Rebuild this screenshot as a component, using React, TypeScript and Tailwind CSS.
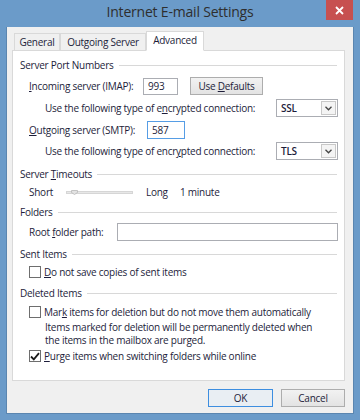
import React from "react";

const txt = "text-[#1d1d3a] whitespace-nowrap";

function Header({ label }: { label: React.ReactNode }) {
  return (
    <div className="flex items-center h-[16px] pl-[7px] pr-[7px]">
      <span className={txt}>{label}</span>
      <div className="flex-1 h-px bg-[#d8d8d8] ml-[5px]" />
    </div>
  );
}

function Dropdown({ value }: { value: string }) {
  return (
    <div className="w-[62px] h-[18px] bg-white border border-[#abadb3] flex items-center justify-between pl-[4px] pr-[1px]">
      <span className={`${txt} font-semibold`}>{value}</span>
      <div className="w-[15px] h-[14px] border border-[#c8c8c8] bg-[#f4f4f4] flex items-center justify-center">
        <svg width="7" height="5" viewBox="0 0 7 5">
          <path d="M0.5 0.8 L3.5 3.8 L6.5 0.8" stroke="#444" strokeWidth="1.3" fill="none" />
        </svg>
      </div>
    </div>
  );
}

function Checkbox({ checked }: { checked?: boolean }) {
  return (
    <div className="w-[12px] h-[12px] bg-white border border-[#6e6e6e] flex items-center justify-center shrink-0">
      {checked && (
        <svg width="10" height="9" viewBox="0 0 10 9">
          <path d="M1 4.5 L3.8 7.3 L9 1.2" stroke="#1a1a1a" strokeWidth="1.8" fill="none" />
        </svg>
      )}
    </div>
  );
}

function Tab({ label, selected, w }: { label: string; selected?: boolean; w: string }) {
  return selected ? (
    <div className={`${w} h-[20px] -mb-px relative z-10 bg-white border border-[#d9d9d9] border-b-white flex items-start justify-center pt-[3px] ${txt}`}>
      {label}
    </div>
  ) : (
    <div className={`${w} h-[17px] bg-[#f0f0f0] border border-[#d9d9d9] border-b-0 flex items-center justify-center ${txt}`}>
      {label}
    </div>
  );
}

export default function App() {
  return (
    <div className="w-[360px] h-[420px] bg-[#6b9bc9] flex flex-col font-['Open_Sans','Noto_Sans',sans-serif] text-[10px] tracking-[-0.25px] leading-none">
      <div className="h-[27px] relative flex items-center justify-center">
        <span className="text-[14px] tracking-[-0.2px] text-[#2e2e2e] -mt-[3px]">Internet E-mail Settings</span>
        <div className="absolute right-[7px] top-0 w-[27px] h-[20px] bg-[#c75050] flex items-center justify-center">
          <svg width="9" height="9" viewBox="0 0 9 9">
            <path d="M1 1 L8 8 M8 1 L1 8" stroke="white" strokeWidth="1.8" />
          </svg>
        </div>
      </div>
      <div className="mx-[6px] mb-[6px] flex-1 bg-[#f0f0f0] flex flex-col pt-[4px] border border-[#5b86b0] border-t-0">
        <div className="flex items-end pl-[7px] h-[19px]">
          <Tab label="General" w="w-[46px]" />
          <Tab label="Outgoing Server" w="w-[86px]" />
          <Tab label="Advanced" w="w-[58px]" selected />
        </div>
        <div className="ml-[5px] mr-[8px] h-[331px] bg-white border border-[#d9d9d9] flex flex-col pt-[6px]">
          <Header label="Server Port Numbers" />
          <div className="flex items-center h-[18px] mt-[4px] pl-[16px]">
            <span className={`${txt} w-[114px]`}><u>I</u>ncoming server (IMAP):</span>
            <div className="w-[35px] h-[17px] border border-[#abadb3] bg-white flex items-center pl-[4px]">
              <span className={txt}>993</span>
            </div>
            <div className="ml-[12px] w-[73px] h-[18px] border border-[#adadad] bg-gradient-to-b from-[#f2f2f2] to-[#e3e3e3] flex items-center justify-center">
              <span className={txt}>Use <u>D</u>efaults</span>
            </div>
          </div>
          <div className="flex items-center h-[18px] mt-[4px] pl-[32px]">
            <span className={`${txt} w-[231px]`}>Use the following type of e<u>n</u>crypted connection:</span>
            <Dropdown value="SSL" />
          </div>
          <div className="flex items-center h-[18px] mt-[4px] pl-[16px]">
            <span className={`${txt} w-[118px]`}><u>O</u>utgoing server (SMTP):</span>
            <div className="w-[38px] h-[18px] border border-[#569de5] bg-white flex items-center pl-[4px]">
              <span className={txt}>587</span>
            </div>
          </div>
          <div className="flex items-center h-[18px] mt-[3px] pl-[32px]">
            <span className={`${txt} w-[231px]`}>Use the following type of encr<u>y</u>pted connection:</span>
            <Dropdown value="TLS" />
          </div>
          <div className="mt-[6px]">
            <Header label={<>Server <u>T</u>imeouts</>} />
          </div>
          <div className="flex items-center h-[16px] mt-[2px] pl-[16px]">
            <span className={`${txt} w-[37px]`}>Short</span>
            <div className="relative w-[67px] h-[6px] flex items-center">
              <div className="w-full h-[3px] bg-[#e7e7e7] border border-[#d6d6d6]" />
              <svg className="absolute left-[5px] top-[1px]" width="7" height="5" viewBox="0 0 7 5">
                <path d="M0.5 0.5 H6.5 V2.5 L3.5 4.5 L0.5 2.5 Z" fill="#e3e3e3" stroke="#b8b8b8" strokeWidth="0.8" />
              </svg>
            </div>
            <span className={`${txt} ml-[13px] w-[34px]`}>Long</span>
            <span className={txt}>1 minute</span>
          </div>
          <div className="mt-[4px]">
            <Header label="Folders" />
          </div>
          <div className="flex items-center h-[18px] mt-[3px] pl-[16px]">
            <span className={`${txt} w-[88px]`}>Root <u>f</u>older path:</span>
            <div className="w-[221px] h-[18px] border border-[#abadb3] bg-white" />
          </div>
          <div className="mt-[5px]">
            <Header label="Sent Items" />
          </div>
          <div className="flex items-center h-[16px] mt-[2px] pl-[16px] gap-[3px]">
            <Checkbox />
            <span className={txt}><u>D</u>o not save copies of sent items</span>
          </div>
          <div className="mt-[5px]">
            <Header label="Deleted Items" />
          </div>
          <div className="flex items-center h-[16px] mt-[3px] pl-[16px] gap-[3px]">
            <Checkbox />
            <span className={txt}>Mar<u>k</u> items for deletion but do not move them automatically</span>
          </div>
          <div className={`${txt} pl-[32px] mt-[1px] leading-[13px]`}>
            Items marked for deletion will be permanently deleted when
            <br />
            the items in the mailbox are purged.
          </div>
          <div className="flex items-center h-[16px] mt-[1px] pl-[16px] gap-[3px]">
            <Checkbox checked />
            <span className={txt}><u>P</u>urge items when switching folders while online</span>
          </div>
        </div>
        <div className="flex justify-end gap-[8px] mr-[8px] mt-[8px]">
          <div className="w-[65px] h-[18px] border border-[#3d8ee0] bg-[#e9eef3] flex items-center justify-center">
            <span className={txt}>OK</span>
          </div>
          <div className="w-[64px] h-[18px] border border-[#adadad] bg-gradient-to-b from-[#f2f2f2] to-[#e3e3e3] flex items-center justify-center">
            <span className={txt}>Cancel</span>
          </div>
        </div>
      </div>
    </div>
  );
}
